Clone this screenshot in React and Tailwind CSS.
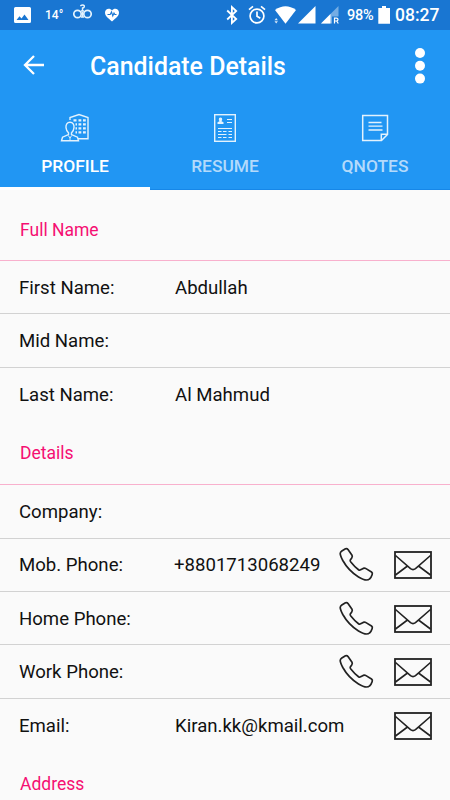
import React from 'react';

function StatusBar() {
  return (
    <div className="flex h-[30px] items-center bg-[#1976d2] text-white">
      <svg className="ml-[14px] h-[30px] w-[17px] shrink-0" viewBox="0 0 17 30" fill="#fff">
        <path fillRule="evenodd" d="M1.500 7h14q1.500 0 1.500 1.500v13q0 1.500-1.500 1.500h-14q-1.500 0-1.500-1.500v-13q0-1.500 1.500-1.500zM2.500 20h12l-4-5.500-3 4-2-2.300z" />
      </svg>
      <span className="ml-[14px] w-[17px] whitespace-nowrap pt-px text-[12px] font-medium leading-[29px]">14°</span>
      <svg className="ml-[11px] h-[30px] w-[19px] shrink-0" viewBox="0 0 19 30" fill="none" stroke="#e3f2fd" strokeWidth="1.700">
        <circle cx="4.500" cy="14" r="3.700" />
        <circle cx="14.500" cy="14" r="3.700" />
        <path d="M9.500 12v5M8 11h3M8 17h3M7.300 5.800q2.700-1.600 4 0 .4 1.700-1.800 2.200v2.500" strokeWidth="1.400" />
      </svg>
      <svg className="ml-[13px] h-[30px] w-[14px] shrink-0" viewBox="0 0 14 30">
        <path fill="#fff" d="M7 21.500C3 18 0 16 0 12.500 0 8.500 5 7.500 7 10.500c2-3 7-2 7 2 0 3.500-3 5.500-7 9z" />
        <path fill="none" stroke="#1976d2" strokeWidth="1.100" d="M2.500 14.500h2.700l1.300-2.500 1.300 4 1.200-3 .8 1.500h1.700" />
      </svg>
      <svg className="ml-[107px] h-[30px] w-[12px] shrink-0" viewBox="0 0 12 30" fill="none" stroke="#fff" strokeWidth="1.800">
        <path d="M1.200 10.500l9 8.500-4.300 4V7l4.300 4-9 8.500" />
      </svg>
      <svg className="ml-[10px] h-[30px] w-[18px] shrink-0" viewBox="0 0 18 30" fill="none" stroke="#fff" strokeWidth="1.700">
        <circle cx="9" cy="16" r="6.900" />
        <path d="M9 11.500v4.800l3.300 2M1 9.600l4-3.300M17 9.600l-4-3.300" />
      </svg>
      <svg className="ml-[8px] h-[30px] w-[22px] shrink-0" viewBox="0 0 22 30" fill="#fff">
        <path d="M1 10Q11.500 2.500 22 10L11.500 23.800z" />
        <path d="M2.200 18l1.700 2.200H.5zM2.200 23.500l1.700-2.300H.5z" opacity=".85" />
      </svg>
      <svg className="ml-[2px] h-[30px] w-[18px] shrink-0" viewBox="0 0 18 30" fill="#fff">
        <path d="M17.500 6v17.500H0z" />
      </svg>
      <svg className="ml-[4px] h-[30px] w-[20px] shrink-0" viewBox="0 0 20 30">
        <path fill="#75ade4" d="M18.500 6v10.500h-6.500v7H1z" />
        <path fill="#fff" d="M10.500 14v9.500H1z" />
        <path fill="none" stroke="#fff" strokeWidth="1.200" d="M14.500 23.500v-5.300h2q1.500 0 1.500 1.400t-1.500 1.400h-2m2.200 0l1.600 2.500" />
      </svg>
      <span className="ml-[7px] w-[28px] whitespace-nowrap pt-px text-[14.5px] font-medium leading-[29px] tracking-[-0.3px]">98%</span>
      <svg className="ml-[3px] h-[30px] w-[13px] shrink-0" viewBox="0 0 13 30" fill="#fff">
        <path d="M4 6h4v2h4v15.800H.3V8H4z" />
      </svg>
      <span className="ml-[4px] whitespace-nowrap pt-px text-[17.5px] font-medium leading-[29px]">08:27</span>
    </div>
  );
}

function ProfileIcon() {
  return (
    <svg className="h-[30px] w-[30px]" viewBox="0 0 30 30" fill="none" stroke="#e3f2fd" strokeWidth="1.400">
      <path d="M10 7V4.500l9-3 9 3v21.300H18" />
      <path d="M13.500 7.300h3M18.500 7.300h2.800M23 7.300h2.800M15.500 11.300h1.500M18.500 11.300h2.800M23 11.300h2.800M15.500 15.300h1.500M18.500 15.300h2.800M23 15.300h2.800M15.500 19.300h1.500M18.500 19.300h2.800M23 19.300h2.800" strokeWidth="2.200" />
      <path d="M10 9.300c-3 0-4.300 2.500-4 5.300.3 2.800 1.300 4.400 2.500 5.200v1.800l-6 2.600-1 3.500h17l-1-3.500-6-2.600v-1.800c1.200-.8 2.200-2.400 2.500-5.200.3-2.800-1-5.300-4-5.300z" fill="#2196f3" />
      <path d="M8.300 22.500l1.700 2.500 1.700-2.500M10 25v2.500" strokeWidth="1" />
    </svg>
  );
}

function ResumeIcon() {
  return (
    <svg className="h-[30px] w-[30px]" viewBox="0 0 30 30" fill="none" stroke="#e3f2fd" strokeWidth="1.400">
      <rect x="4.700" y="1.700" width="20.600" height="26.600" />
      <path d="M17 6.500h5M17 9.500h5M8 15.500h14M8 18.500h3.500M13 18.500h3.500M18.500 18.500h3.500M8 21.500h8.500M18.500 21.500h3.500M8 24.500h3.500M13 24.500h3.500M18.500 24.500h3.500" strokeWidth="1.200" />
      <path d="M10.500 4.500q2 0 1.700 2.300l-.7 1.500 2 1v1.700h-6V9.300l2-1-.7-1.500Q8.500 4.500 10.500 4.500z" fill="#e3f2fd" stroke="none" />
    </svg>
  );
}

function NotesIcon() {
  return (
    <svg className="h-[30px] w-[30px]" viewBox="0 0 30 30" fill="none" stroke="#e3f2fd" strokeWidth="1.500">
      <path d="M2.700 2.500h24.800v19l-6 6H2.700zM27.300 21.300h-6v6" />
      <path d="M8.500 9.500h13M8.500 13.200h14M8.500 17h14" strokeWidth="1.300" />
    </svg>
  );
}

function Tab({ icon, label, active }) {
  return (
    <div className={`flex w-[150px] flex-col items-center ${active ? 'border-b-[3px] border-white' : 'border-b border-[#1687e8]'}`}>
      <div className="mt-[10px] h-[30px]">{icon}</div>
      <div className={`mt-[10px] text-[17.4px] font-medium leading-[26px] ${active ? 'text-white' : 'text-[#b3dafb]'}`}>{label}</div>
    </div>
  );
}

function PhoneIcon() {
  return (
    <svg className="h-[36px] w-[36px]" viewBox="0 0 36 36" fill="none" stroke="#222" strokeWidth="1.700" strokeLinejoin="round">
      <path d="M2.800 4L6.500 1.800Q8 1.200 9 2.500L13 8.200Q13.700 9.500 12.700 11L11.300 13Q10.800 14 11.800 15Q15.500 19.700 19.500 22.700Q20.500 23.400 21.600 22.800L24.200 21.400Q25.700 20.800 27 21.600L32.500 25Q33.800 26 33.200 27.600Q32.300 30.500 30.500 32Q29.500 33 27.500 33Q24.500 33 19.500 30Q9.500 23.700 3.800 13.500Q1.200 8.500 1.200 6.500Q1.300 5 2.800 4Z" />
    </svg>
  );
}

function MailIcon() {
  return (
    <svg className="h-[28px] w-[38px]" viewBox="0 0 38 28" fill="none" stroke="#222" strokeWidth="1.800">
      <rect x="1" y="1" width="36" height="26" />
      <path d="M1.500 4.500l15 13.200q2.500 1.800 5 0L36.500 4.500M1.500 24l12-9M36.500 24l-12-9" strokeWidth="1.600" />
    </svg>
  );
}

function Row({ label, value, phone, mail, last, nudge }) {
  return (
    <div className={`flex h-[53.4px] items-center ${last ? '' : 'border-b-[1.400px] border-[#d2d2d2]'}`}>
      <div className="w-[155px] shrink-0 whitespace-nowrap pl-[19px] pt-px">{label}</div>
      <div className={`min-w-0 flex-1 whitespace-nowrap pt-px ${nudge ? 'pl-[19px]' : 'pl-[20px]'}`}>{value}</div>
      <div className="flex w-[111.500px] shrink-0 items-center pt-px">
        <div className="w-[55px] shrink-0">{phone && <PhoneIcon />}</div>
        {mail && <MailIcon />}
      </div>
    </div>
  );
}

function Heading({ children, tall }) {
  return (
    <div className={`flex items-center border-b border-[#f8b0cd] pl-[20px] text-[17.5px] text-[#f50f72] ${tall ? 'h-[71px] pt-[9px]' : 'h-[64px] pt-px'}`}>
      {children}
    </div>
  );
}

export default function App() {
  return (
    <div className="h-[800px] w-[450px] overflow-hidden bg-[#fafafa] font-['Roboto',sans-serif] text-[18.6px] leading-[24px] text-[#111]">
      <StatusBar />
      <header className="flex h-[73px] items-center bg-[#2196f3] text-white">
        <svg className="ml-[23px] h-[24px] w-[22px]" viewBox="0 0 22 24" fill="none" stroke="#fff" strokeWidth="2.300">
          <path d="M21 10H2.500M11 1l-9 9 9 9" />
        </svg>
        <h1 className="ml-[45px] flex-1 whitespace-nowrap text-[24.9px] font-medium leading-[30px]">Candidate Details</h1>
        <svg className="mr-[24px] h-[38px] w-[12px]" viewBox="0 0 12 38" fill="#fff">
          <circle cx="6" cy="5" r="5" />
          <circle cx="6" cy="17.800" r="5" />
          <circle cx="6" cy="30.600" r="5" />
        </svg>
      </header>
      <nav className="flex h-[87px] bg-[#2196f3]">
        <Tab icon={<ProfileIcon />} label="PROFILE" active />
        <Tab icon={<ResumeIcon />} label="RESUME" />
        <Tab icon={<NotesIcon />} label="QNOTES" />
      </nav>
      <Heading tall>Full Name</Heading>
      <Row label="First Name:" value="Abdullah" />
      <Row label="Mid Name:" />
      <Row label="Last Name:" value="Al Mahmud" last />
      <Heading>Details</Heading>
      <Row label="Company:" />
      <Row label="Mob. Phone:" value="+8801713068249" phone mail nudge />
      <Row label="Home Phone:" phone mail />
      <Row label="Work Phone:" phone mail />
      <Row label="Email:" value="Kiran.kk@kmail.com" mail last />
      <Heading>Address</Heading>
    </div>
  );
}
